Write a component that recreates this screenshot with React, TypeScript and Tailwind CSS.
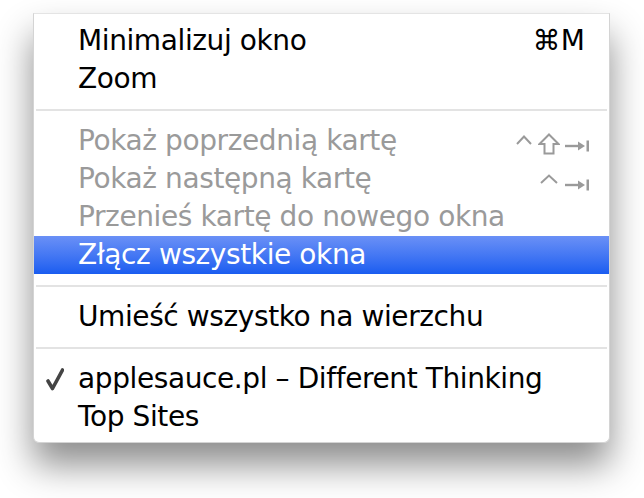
import React from 'react';

type Item =
  | { sep: true }
  | {
      sep?: false;
      label: string;
      disabled?: boolean;
      active?: boolean;
      checked?: boolean;
      shortcut?: 'cmdM' | 'ctrlShiftTab' | 'ctrlTab';
    };

const items: Item[] = [
  { label: 'Minimalizuj okno', shortcut: 'cmdM' },
  { label: 'Zoom' },
  { sep: true },
  { label: 'Pokaż poprzednią kartę', disabled: true, shortcut: 'ctrlShiftTab' },
  { label: 'Pokaż następną kartę', disabled: true, shortcut: 'ctrlTab' },
  { label: 'Przenieś kartę do nowego okna', disabled: true },
  { label: 'Złącz wszystkie okna', active: true },
  { sep: true },
  { label: 'Umieść wszystko na wierzchu' },
  { sep: true },
  { label: 'applesauce.pl – Different Thinking', checked: true },
  { label: 'Top Sites' },
];

const Caret = ({ w = 16 }: { w?: number }) => (
  <svg width={w} height="10" viewBox={`0 0 ${w} 10`} className="block">
    <polyline points={`1,9 ${w / 2},1.5 ${w - 1},9`} fill="none" stroke="#9a9a9a" strokeWidth="2" />
  </svg>
);

const Shift = () => (
  <svg width="22" height="22" viewBox="0 0 22 22" className="block">
    <path d="M11 1.5 L20.5 11 L15.5 11 L15.5 20.5 L6.5 20.5 L6.5 11 L1.5 11 Z" fill="none" stroke="#9a9a9a" strokeWidth="2" strokeLinejoin="miter" />
  </svg>
);

const Tab = () => (
  <svg width="24" height="12" viewBox="0 0 24 12" className="block">
    <line x1="0" y1="6" x2="15" y2="6" stroke="#9a9a9a" strokeWidth="2.4" />
    <path d="M13 1.5 L20 6 L13 10.5 Z" fill="#9a9a9a" />
    <rect x="21.5" y="0.5" width="2.5" height="11" fill="#9a9a9a" />
  </svg>
);

const Check = () => (
  <svg width="18" height="23" viewBox="0 0 18 23" className="block">
    <path d="M2 13 L6.5 20.5 L16.5 2" fill="none" stroke="#444" strokeWidth="3.6" strokeLinejoin="round" strokeLinecap="round" />
  </svg>
);

const Shortcut = ({ kind }: { kind: string }) => {
  if (kind === 'cmdM') return <span className="pr-[24px] text-black tracking-normal">⌘M</span>;
  if (kind === 'ctrlShiftTab')
    return (
      <div className="flex items-start pr-[20px]">
        <div className="mt-[8px] mr-[6px]"><Caret /></div>
        <div className="mt-[6px] mr-[5px]"><Shift /></div>
        <div className="mt-[13px]"><Tab /></div>
      </div>
    );
  return (
    <div className="flex items-start pr-[20px]">
      <div className="mt-[7px] mr-[7px]"><Caret w={18} /></div>
      <div className="mt-[12px]"><Tab /></div>
    </div>
  );
};

export default function App() {
  return (
    <div className="w-[644px] h-[498px] bg-white pt-[13px] pl-[33px] font-['DejaVu_Sans',sans-serif]">
      <div className="w-[577px] bg-white border border-[#d4d4d4] border-t-[#e4e4e4] rounded-b-[6px] pt-[8px] pb-[6px] shadow-[0_22px_36px_rgba(0,0,0,0.45)]">
        {items.map((item, i) =>
          item.sep ? (
            <div key={i} className="h-6 flex items-center px-[2px]">
              <div className="h-[2px] w-full bg-[#e3e3e3]" />
            </div>
          ) : (
            <div
              key={i}
              className={`h-[38px] flex items-center text-[28px] leading-[38px] tracking-[-0.4px] ${
                item.active
                  ? 'bg-linear-to-b from-[#6a90f6] to-[#195cf0] text-white'
                  : item.disabled
                  ? 'text-[#9a9a9a]'
                  : 'text-black'
              }`}
            >
              <div className="w-[44px] flex justify-end pr-[14px]">{item.checked && <Check />}</div>
              <span className="flex-1 whitespace-nowrap">{item.label}</span>
              {item.shortcut && <Shortcut kind={item.shortcut} />}
            </div>
          )
        )}
      </div>
    </div>
  );
}
